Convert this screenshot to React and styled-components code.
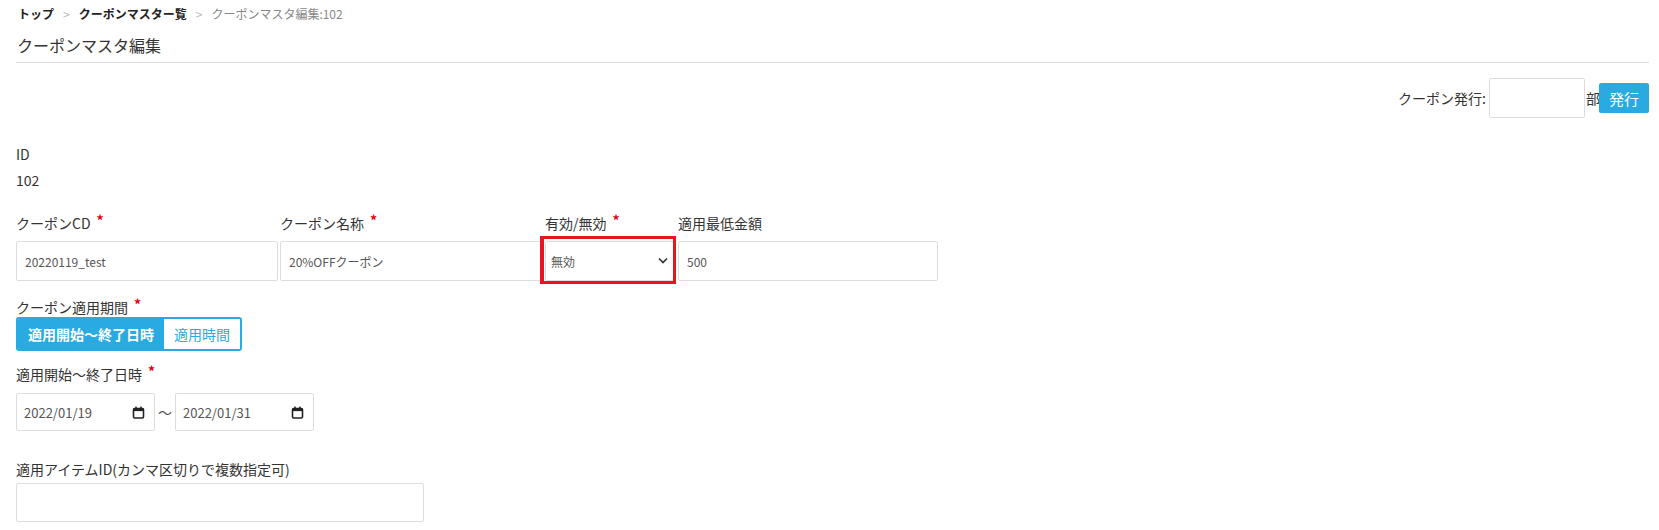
import React from 'react';
import styled, { createGlobalStyle } from 'styled-components';

const GlobalStyle = createGlobalStyle`
  body {
    margin: 0;
    background: #fff;
    font-family: "Noto Sans CJK JP", "Noto Sans", sans-serif;
    color: #333;
  }
  * { box-sizing: border-box; }
`;

const Page = styled.div`
  padding: 5px 10px 20px 16px;
`;

const Breadcrumb = styled.nav`
  display: flex;
  align-items: center;
  font-size: 12px;
  line-height: 18px;
  padding-left: 2px;
`;

const Crumb = styled.span`
  color: ${p => (p.$current ? '#888' : '#222')};
  font-weight: ${p => (p.$current ? 400 : 700)};
`;

const Sep = styled.span`
  color: #bbb;
  margin: 0 9px;
`;

const Header = styled.div`
  margin-top: 10px;
  padding-bottom: 5px;
  border-bottom: 1px solid #ddd;
`;

const Title = styled.h1`
  margin: 0;
  padding-left: 1px;
  font-size: 16px;
  font-weight: 400;
  line-height: 24px;
  color: #333;
`;

const IssueRow = styled.div`
  display: flex;
  justify-content: flex-end;
  align-items: center;
  margin-top: 15px;
  font-size: 14px;
  color: #333;
`;

const IssueInput = styled.input`
  width: 96px;
  height: 40px;
  margin: 0 1px 0 3px;
  border: 1px solid #ddd;
  border-radius: 2px;
`;

const Unit = styled.span`
  width: 13px;
  overflow: hidden;
  white-space: nowrap;
`;

const IssueButton = styled.button`
  width: 50px;
  height: 30px;
  padding: 0;
  border: none;
  border-radius: 2px;
  background: #29abe2;
  color: #fff;
  font-family: inherit;
  font-size: 15px;
`;

const Block = styled.div`
  margin-top: ${p => p.$top}px;
`;

const Label = styled.div`
  height: 20px;
  font-size: 14px;
  line-height: 20px;
  color: #333;
  white-space: nowrap;
`;

const Value = styled.div`
  margin-top: 6px;
  font-size: 14px;
  line-height: 20px;
`;

const Required = styled.span`
  margin-left: 6px;
  color: #e60012;
  font-weight: 700;
  font-size: 14px;
  line-height: 0;
  vertical-align: 3px;
`;

const FieldRow = styled.div`
  display: flex;
  align-items: flex-end;
  margin-top: 23px;
`;

const Field = styled.div`
  width: ${p => p.$width}px;
  margin-right: ${p => p.$gap || 0}px;
  display: flex;
  flex-direction: column;
  gap: 8px;
`;

const TextInput = styled.input`
  display: block;
  width: ${p => (p.$width ? `${p.$width}px` : '100%')};
  height: ${p => p.$height || 40}px;
  padding: 0 8px;
  border: 1px solid #ddd;
  border-radius: 2px;
  font-family: inherit;
  font-size: 12px;
  color: #555;
  background: #fff;
`;

const SelectWrap = styled.div`
  position: relative;
`;

const Marker = styled.div`
  position: absolute;
  top: -5px;
  left: -5px;
  right: -2px;
  bottom: -3px;
  border: 3px solid #e8141f;
  border-left-width: 4px;
  pointer-events: none;
`;

const SelectBox = styled.div`
  display: flex;
  align-items: center;
  height: 40px;
  padding-right: 4px;
  border: 1px solid #ddd;
  border-radius: 2px;
  background: #fff;
`;

const Select = styled.select`
  flex: 1;
  height: 100%;
  padding: 0 5px;
  border: none;
  outline: none;
  appearance: none;
  background: transparent;
  font-family: inherit;
  font-size: 12px;
  color: #555;
`;

const Toggle = styled.div`
  display: inline-flex;
  border: 2px solid #29abe2;
  border-radius: 3px;
  overflow: hidden;
`;

const ToggleButton = styled.button`
  height: 30px;
  padding: 0 10px;
  border: none;
  background: ${p => (p.$active ? '#29abe2' : '#fff')};
  color: ${p => (p.$active ? '#fff' : '#29abe2')};
  font-family: inherit;
  font-size: 14px;
  font-weight: ${p => (p.$active ? 700 : 400)};
`;

const DateRow = styled.div`
  display: flex;
  align-items: center;
  gap: 3px;
  margin-top: 9px;
`;

const DateBox = styled.div`
  display: flex;
  align-items: center;
  width: 139px;
  height: 38px;
  padding: 0 9px 0 7px;
  border: 1px solid #ddd;
  border-radius: 2px;
`;

const DateText = styled.input`
  flex: 1;
  min-width: 0;
  border: none;
  outline: none;
  padding: 0;
  font-family: inherit;
  font-size: 13px;
  color: #555;
`;

const Tilde = styled.span`
  font-size: 14px;
  color: #555;
`;

const Calendar = () => (
  <svg width="13" height="13" viewBox="0 0 13 13">
    <rect x="1.5" y="2.5" width="10" height="9.5" rx="1.2" fill="none" stroke="#222" strokeWidth="1.6" />
    <rect x="1.5" y="2.5" width="10" height="2.6" fill="#222" />
    <rect x="3.2" y="0.6" width="1.6" height="2.4" fill="#222" />
    <rect x="8.2" y="0.6" width="1.6" height="2.4" fill="#222" />
  </svg>
);

const Chevron = () => (
  <svg width="12" height="8" viewBox="0 0 12 8">
    <polyline points="2,1.5 6,5.5 10,1.5" fill="none" stroke="#333" strokeWidth="1.7" />
  </svg>
);

const DateField = ({ value }) => (
  <DateBox>
    <DateText readOnly value={value} />
    <Calendar />
  </DateBox>
);

export default function App() {
  return (
    <Page>
      <GlobalStyle />
      <Breadcrumb>
        <Crumb>トップ</Crumb>
        <Sep>&gt;</Sep>
        <Crumb>クーポンマスター覧</Crumb>
        <Sep>&gt;</Sep>
        <Crumb $current>クーポンマスタ編集:102</Crumb>
      </Breadcrumb>

      <Header>
        <Title>クーポンマスタ編集</Title>
      </Header>

      <IssueRow>
        <span>クーポン発行:</span>
        <IssueInput />
        <Unit>部</Unit>
        <IssueButton>発行</IssueButton>
      </IssueRow>

      <Block $top={26}>
        <Label>ID</Label>
        <Value>102</Value>
      </Block>

      <FieldRow>
        <Field $width={262} $gap={2}>
          <Label>クーポンCD<Required>*</Required></Label>
          <TextInput readOnly value="20220119_test" />
        </Field>
        <Field $width={261} $gap={4}>
          <Label>クーポン名称<Required>*</Required></Label>
          <TextInput readOnly value="20%OFFクーポン" />
        </Field>
        <Field $width={129} $gap={4}>
          <Label>有効/無効<Required>*</Required></Label>
          <SelectWrap>
            <SelectBox>
              <Select defaultValue="0">
                <option value="1">有効</option>
                <option value="0">無効</option>
              </Select>
              <Chevron />
            </SelectBox>
            <Marker />
          </SelectWrap>
        </Field>
        <Field $width={260}>
          <Label>適用最低金額</Label>
          <TextInput readOnly value="500" />
        </Field>
      </FieldRow>

      <Block $top={16}>
        <Label>クーポン適用期間<Required>*</Required></Label>
        <Toggle>
          <ToggleButton $active>適用開始〜終了日時</ToggleButton>
          <ToggleButton>適用時間</ToggleButton>
        </Toggle>
      </Block>

      <Block $top={13}>
        <Label>適用開始〜終了日時<Required>*</Required></Label>
        <DateRow>
          <DateField value="2022/01/19" />
          <Tilde>〜</Tilde>
          <DateField value="2022/01/31" />
        </DateRow>
      </Block>

      <Block $top={28}>
        <Label>適用アイテムID(カンマ区切りで複数指定可)</Label>
        <Block $top={4}>
          <TextInput $width={408} $height={39} />
        </Block>
      </Block>
    </Page>
  );
}
